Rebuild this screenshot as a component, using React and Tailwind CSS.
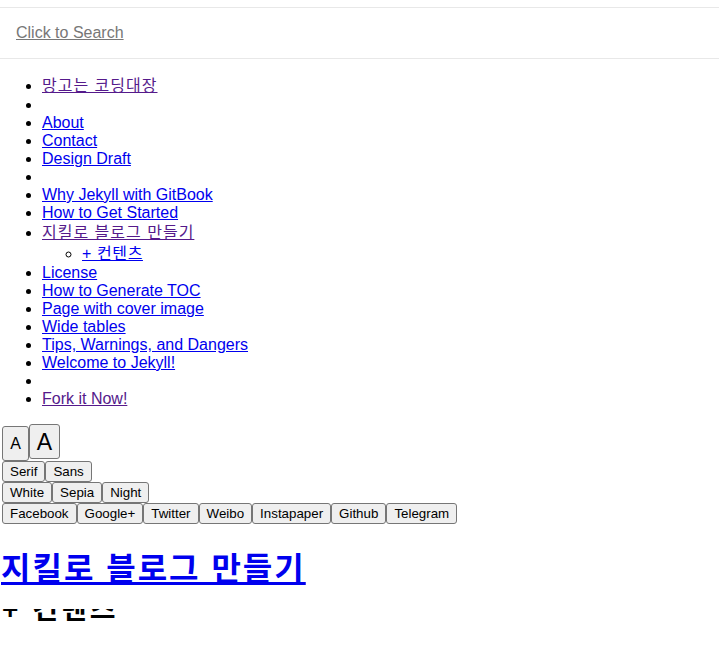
const SANS = "font-['Liberation_Sans','Noto_Sans_CJK_KR',Arial,sans-serif]";

const blue = "text-[#0000ee] underline";
const visited = "text-[#551a8b] underline";

const nav = [
  { label: "망고는 코딩대장", cls: visited, kr: true },
  { empty: true },
  { label: "About", cls: blue },
  { label: "Contact", cls: blue },
  { label: "Design Draft", cls: blue },
  { empty: true },
  { label: "Why Jekyll with GitBook", cls: blue },
  { label: "How to Get Started", cls: blue },
  { label: "지킬로 블로그 만들기", cls: visited, kr: true, children: ["+ 컨텐츠"] },
  { label: "License", cls: blue },
  { label: "How to Generate TOC", cls: blue },
  { label: "Page with cover image", cls: blue },
  { label: "Wide tables", cls: blue },
  { label: "Tips, Warnings, and Dangers", cls: blue },
  { label: "Welcome to Jekyll!", cls: blue },
  { empty: true },
  { label: "Fork it Now!", cls: visited },
];

const btn =
  "bg-[#efefef] border border-[#767676] rounded-[3px] text-black text-[13.33px] leading-[15px] py-[2px] px-[7px]";

function Row({ items }) {
  return (
    <div className="flex ml-[2px]">
      {items.map((t) => (
        <button key={t} className={btn}>
          {t}
        </button>
      ))}
    </div>
  );
}

export default function App() {
  return (
    <div className={`${SANS} bg-white text-black min-h-[658px] text-[16px]`}>
      {/* search */}
      <div className="mt-[7px] border-y border-[#e8e8e8] h-[52px] px-4 flex items-center">
        <a className="text-[#777] underline leading-[18px]">Click to Search</a>
      </div>

      {/* toc */}
      <ul className="list-disc pl-[42px] my-4 leading-[18px]">
        {nav.map((n, i) =>
          n.empty ? (
            <li key={i} className="h-[18px]"></li>
          ) : (
            <li key={i} className={n.kr ? "leading-[21px]" : ""}>
              <a className={`${n.cls} ${n.kr ? "tracking-[1px]" : ""}`}>{n.label}</a>
              {n.children && (
                <ul className="list-[circle] pl-10">
                  {n.children.map((c) => (
                    <li key={c} className="leading-[21px]">
                      <a className={`${blue} tracking-[0.6px]`}>{c}</a>
                    </li>
                  ))}
                </ul>
              )}
            </li>
          )
        )}
      </ul>

      {/* font settings */}
      <div className="flex items-start ml-[2px]">
        <button className="bg-[#efefef] border border-[#767676] rounded-[3px] h-[35px] w-[27px] mt-[2px] flex items-center justify-center text-[16px] leading-[18px]">
          A
        </button>
        <button className="bg-[#efefef] border border-[#767676] rounded-[3px] h-[35px] w-[31px] flex items-center justify-center text-[23px] leading-[26px]">
          A
        </button>
      </div>
      <Row items={["Serif", "Sans"]} />
      <Row items={["White", "Sepia", "Night"]} />
      <Row items={["Facebook", "Google+", "Twitter", "Weibo", "Instapaper", "Github", "Telegram"]} />

      <h1 className="mt-[24px] pl-[1px] text-[32px] font-bold leading-[42px] tracking-[2px]">
        <a className="text-[#0000ee] underline">지킬로 블로그 만들기</a>
      </h1>

      {/* partially hidden heading */}
      <div className="mt-[19px] h-[15px] overflow-hidden">
        <h2 className="-mt-[13px] ml-[2px] text-[28px] font-bold leading-[28px] tracking-[3px]">+ 컨텐츠</h2>
      </div>
    </div>
  );
}
